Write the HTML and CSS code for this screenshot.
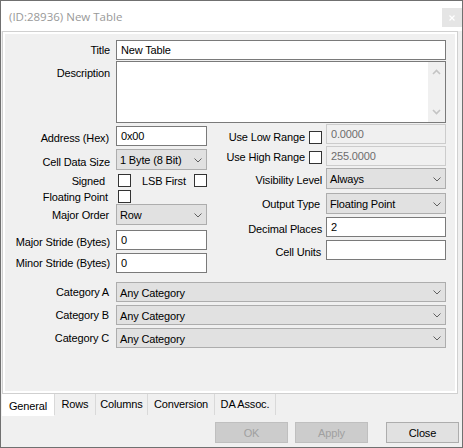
FILE: index.html
```html
<!DOCTYPE html>
<html>
<head>
<meta charset="utf-8">
<link rel="stylesheet" href="styles.css">
</head>
<body>
<div class="window">
  <div class="titlebar">
    <span class="title">(ID:28936) New Table</span>
    <div class="close-btn"><svg width="6" height="6" viewBox="0 0 6 6"><path d="M0.5 0.5L5.5 5.5M5.5 0.5L0.5 5.5" stroke="#fff" stroke-width="1.2" fill="none"/></svg></div>
  </div>
  <div class="page">
    <div class="page-inner">
      <div class="row r-title"><span class="lbl">Title</span><div class="tb w330">New Table</div></div>
      <div class="row r-desc"><span class="lbl top">Description</span>
        <div class="ta">
          <div class="sb">
            <svg width="9" height="6" viewBox="0 0 9 6"><polyline points="1,5 4.5,1.5 8,5" stroke="#c4c4c4" stroke-width="1.6" fill="none"/></svg>
            <svg width="9" height="6" viewBox="0 0 9 6"><polyline points="1,1 4.5,4.5 8,1" stroke="#c4c4c4" stroke-width="1.6" fill="none"/></svg>
          </div>
        </div>
      </div>
      <div class="cols">
        <div class="col left">
          <div class="row l-addr"><span class="lbl dn2 pr1">Address (Hex)</span><div class="tb w91">0x00</div></div>
          <div class="row l-size"><span class="lbl dn2">Cell Data Size</span><div class="combo w91"><span>1 Byte (8 Bit)</span><svg class="chev" width="8" height="5" viewBox="0 0 8 5"><polyline points="0.5,0.5 4,4 7.5,0.5" stroke="#606060" stroke-width="1" fill="none"/></svg></div></div>
          <div class="row l-signed"><span class="lbl pr5">Signed</span><div class="cbrow w91"><span class="cb cb-l"></span><span class="lsb">LSB First</span><span class="cb cb-r"></span></div></div>
          <div class="row l-float"><span class="lbl pr2">Floating Point</span><div class="cbrow w91"><span class="cb cb-l"></span></div></div>
          <div class="row l-order"><span class="lbl pr1">Major Order</span><div class="combo w91"><span>Row</span><svg class="chev" width="8" height="5" viewBox="0 0 8 5"><polyline points="0.5,0.5 4,4 7.5,0.5" stroke="#606060" stroke-width="1" fill="none"/></svg></div></div>
          <div class="row l-major"><span class="lbl dn2">Major Stride (Bytes)</span><div class="tb w91">0</div></div>
          <div class="row l-minor"><span class="lbl">Minor Stride (Bytes)</span><div class="tb w91">0</div></div>
        </div>
        <div class="col right">
          <div class="row r-low"><span class="rlbl dn3"><span class="ctext">Use Low Range</span><span class="cb"></span></span><div class="tb dis w120">0.0000</div></div>
          <div class="row r-high"><span class="rlbl dn1"><span class="ctext">Use High Range</span><span class="cb"></span></span><div class="tb dis w120">255.0000</div></div>
          <div class="row r-vis"><span class="rlbl dn1">Visibility Level</span><div class="combo w120"><span>Always</span><svg class="chev" width="8" height="5" viewBox="0 0 8 5"><polyline points="0.5,0.5 4,4 7.5,0.5" stroke="#606060" stroke-width="1" fill="none"/></svg></div></div>
          <div class="row r-out"><span class="rlbl pr2">Output Type</span><div class="combo w120"><span>Floating Point</span><svg class="chev" width="8" height="5" viewBox="0 0 8 5"><polyline points="0.5,0.5 4,4 7.5,0.5" stroke="#606060" stroke-width="1" fill="none"/></svg></div></div>
          <div class="row r-dec"><span class="rlbl dn2">Decimal Places</span><div class="tb w120">2</div></div>
          <div class="row r-units"><span class="rlbl dn2 pr1">Cell Units</span><div class="tb w120"></div></div>
        </div>
      </div>
      <div class="row c-a"><span class="lbl pr1">Category A</span><div class="combo w330"><span>Any Category</span><svg class="chev" width="8" height="5" viewBox="0 0 8 5"><polyline points="0.5,0.5 4,4 7.5,0.5" stroke="#606060" stroke-width="1" fill="none"/></svg></div></div>
      <div class="row c-b"><span class="lbl pr1">Category B</span><div class="combo w330"><span>Any Category</span><svg class="chev" width="8" height="5" viewBox="0 0 8 5"><polyline points="0.5,0.5 4,4 7.5,0.5" stroke="#606060" stroke-width="1" fill="none"/></svg></div></div>
      <div class="row c-c"><span class="lbl pr1">Category C</span><div class="combo w330"><span>Any Category</span><svg class="chev" width="8" height="5" viewBox="0 0 8 5"><polyline points="0.5,0.5 4,4 7.5,0.5" stroke="#606060" stroke-width="1" fill="none"/></svg></div></div>
    </div>
  </div>
  <div class="tabs">
    <div class="tab sel t-gen">General</div>
    <div class="tab t-rows">Rows</div>
    <div class="tab t-cols">Columns</div>
    <div class="tab t-conv">Conversion</div>
    <div class="tab t-da last">DA Assoc.</div>
  </div>
  <div class="buttons">
    <div class="btn disabled">OK</div>
    <div class="btn disabled b-apply">Apply</div>
    <div class="btn b-close">Close</div>
  </div>
</div>
</body>
</html>
```
FILE: styles.css
```css
* { box-sizing: border-box; }
body {
  margin: 0;
  font-family: "Liberation Sans", Arial, sans-serif;
  font-size: 11px;
  letter-spacing: -0.15px;
  color: #000;
}
.window {
  width: 463px;
  height: 448px;
  border: 1px solid #707070;
  background: #f0f0f0;
  display: flex;
  flex-direction: column;
}
.titlebar {
  flex: none;
  height: 30px;
  background: #fff;
  position: relative;
  display: flex;
  align-items: center;
  padding-left: 8px;
}
.title {
  font-family: "Open Sans", "Noto Sans", sans-serif;
  font-size: 11.5px;
  letter-spacing: 0;
  color: #999;
}
.close-btn {
  position: absolute;
  right: 0;
  top: 7px;
  width: 20px;
  height: 19px;
  background: #e5e5e5;
  display: flex;
  align-items: center;
  justify-content: center;
}
.page {
  flex: none;
  height: 363px;
  margin: 0 4px 0 1px;
  border: 1px solid #d0d0d0;
  background: #fff;
  padding: 2px;
}
.page-inner {
  height: 100%;
  background: #f0f0f0;
  padding-top: 6px;
}
.row {
  display: flex;
  align-items: center;
}
.lbl {
  flex: none;
  width: 105px;
  margin-right: 6px;
  text-align: right;
  white-space: nowrap;
}
.rlbl {
  flex: none;
  width: 115px;
  margin-right: 4px;
  display: flex;
  justify-content: flex-end;
  align-items: center;
  white-space: nowrap;
}
.ctext { margin-right: 4px; }
.lbl.top { align-self: flex-start; padding-top: 6px; }
.dn1 { padding-top: 2px; }
.dn2 { padding-top: 4px; }
.dn3 { padding-top: 6px; }
.pr1 { padding-right: 1px; }
.pr2 { padding-right: 2px; }
.pr5 { padding-right: 5px; }

.tb {
  flex: none;
  height: 20px;
  border: 1px solid #7a7a7a;
  background: #fff;
  padding-left: 4px;
  display: flex;
  align-items: center;
  white-space: nowrap;
}
.tb.dis {
  border-color: #cccccc;
  background: #f0f0f0;
  color: #6d6d6d;
}
.w330 { width: 330px; }
.w91 { width: 91px; }
.w120 { width: 120px; }

.combo {
  flex: none;
  height: 21px;
  border: 1px solid #adadad;
  background: #e1e1e1;
  padding: 1px 4px 0 3px;
  display: flex;
  align-items: center;
  justify-content: space-between;
  white-space: nowrap;
}
.chev { flex: none; }

.cb {
  flex: none;
  width: 13px;
  height: 13px;
  border: 1px solid #333;
  background: #fff;
}
.cbrow {
  flex: none;
  display: flex;
  align-items: center;
  height: 13px;
}
.cb-l { margin-left: 2px; }
.lsb { margin-left: 11px; }
.cb-r { margin-left: auto; }

.ta {
  flex: none;
  width: 330px;
  height: 62px;
  border: 1px solid #7a7a7a;
  background: #fff;
  display: flex;
  justify-content: flex-end;
}
.sb {
  width: 17px;
  height: 100%;
  background: #f0f0f0;
  display: flex;
  flex-direction: column;
  justify-content: space-between;
  align-items: center;
  padding: 7px 0 7px 0;
}

.r-desc { margin-top: 1px; }
.cols { display: flex; }
.col { display: flex; flex-direction: column; }
.col.left { width: 202px; flex: none; }
.l-addr { margin-top: 3px; }
.l-size { margin-top: 3px; }
.l-signed { margin-top: 4px; }
.l-float { margin-top: 3px; }
.l-order { margin-top: 1px; }
.l-major { margin-top: 5px; }
.l-minor { margin-top: 3px; }
.r-low { margin-top: 1px; }
.r-high { margin-top: 2px; }
.r-vis { margin-top: 2px; }
.r-out { margin-top: 4px; }
.r-dec { margin-top: 3px; }
.r-units { margin-top: 3px; }
.c-a { margin-top: 9px; }
.c-a .combo, .c-b .combo, .c-c .combo { height: 20px; }
.c-b { margin-top: 3px; }
.c-c { margin-top: 3px; }

.tabs {
  flex: none;
  display: flex;
  height: 22px;
  margin-left: 1px;
}
.tab {
  height: 21px;
  border-left: 1px solid #d9d9d9;
  display: flex;
  align-items: center;
  justify-content: center;
  padding-bottom: 1px;
}
.tab.sel {
  border-left: none;
  background: #fff;
  height: 22px;
  padding-top: 2px;
  padding-bottom: 0;
}
.tab.last { border-right: 1px solid #d9d9d9; }
.t-gen { width: 52px; }
.t-rows { width: 41px; }
.t-cols { width: 52px; }
.t-conv { width: 67px; }
.t-da { width: 62px; }

.buttons {
  flex: none;
  display: flex;
  justify-content: flex-end;
  margin-top: 6px;
  padding-right: 3px;
}
.btn {
  width: 73px;
  height: 21px;
  border: 1px solid #adadad;
  background: #e1e1e1;
  display: flex;
  align-items: center;
  justify-content: center;
}
.btn.disabled {
  background: #cccccc;
  border-color: #bfbfbf;
  color: #a0a0a0;
}
.b-apply { margin-left: 7px; }
.b-close { margin-left: 18px; }
```
